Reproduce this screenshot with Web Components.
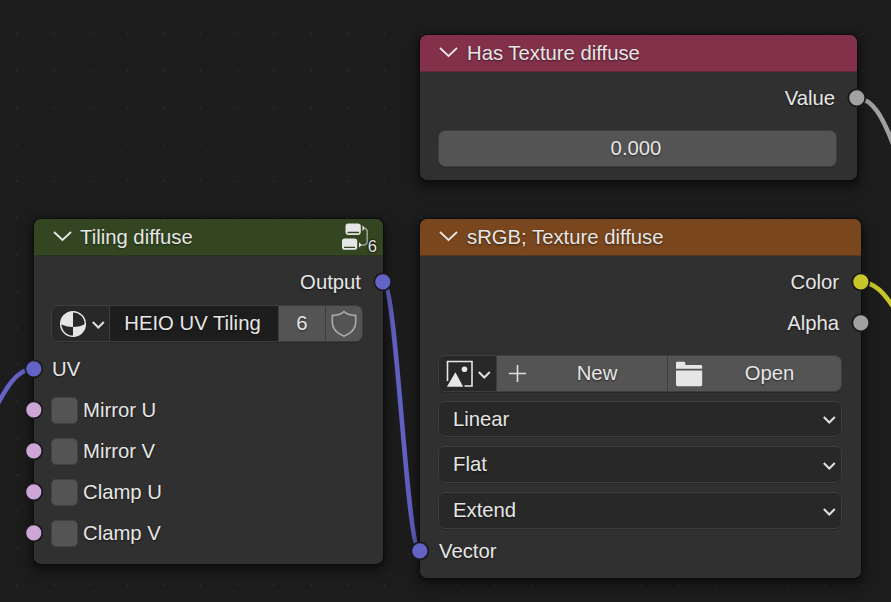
<!DOCTYPE html>
<html lang="en">
<head>
<meta charset="utf-8">
<title>Node editor</title>
<style>
html,body{margin:0;height:100%;overflow:hidden;background:#1d1d1d}
body{font:20.3px/24px "Liberation Sans",Arial,sans-serif;color:#e6e6e6;text-shadow:0 1px 2px rgba(0,0,0,.55)}
</style>
</head>
<body>
<node-canvas>
  <node-card style="left:34px;top:219px;width:349px;height:344.5px;--head:#344621;--line:#29331f;--gap:8px" label="Tiling diffuse">
    <group-badge slot="badge">6</group-badge>
    <node-socket out style="--dot:#6363c7">Output</node-socket>
    <button-row style="margin:3px 0 0 -1px;width:312px">
      <ui-cell dark style="width:57px"><ui-icon name="material"></ui-icon><ui-icon name="chevron"></ui-icon></ui-cell>
      <ui-cell style="width:168px;--cell:#1d1d1d"><span style="margin-right:3px">HEIO UV Tiling</span></ui-cell>
      <ui-cell style="width:46px"><span>6</span></ui-cell>
      <ui-cell style="flex:1"><ui-icon name="shield"></ui-icon></ui-cell>
    </button-row>
    <node-socket style="--dot:#6363c7;margin-top:6px">UV</node-socket>
    <node-socket check style="--dot:#cca6d6">Mirror U</node-socket>
    <node-socket check style="--dot:#cca6d6">Mirror V</node-socket>
    <node-socket check style="--dot:#cca6d6">Clamp U</node-socket>
    <node-socket check style="--dot:#cca6d6">Clamp V</node-socket>
  </node-card>

  <node-card style="left:420px;top:35px;width:437px;height:145px;--head:#83314a;--line:#66293d" label="Has Texture diffuse">
    <node-socket out style="--dot:#a1a1a1">Value</node-socket>
    <button-row style="margin-top:12px;width:399px">
      <ui-cell style="flex:1"><span style="margin-right:3px">0.000</span></ui-cell>
    </button-row>
  </node-card>

  <node-card style="left:420px;top:219px;width:441px;height:359px;--head:#79461d;--line:#5b371b" label="sRGB; Texture diffuse">
    <node-socket out style="--dot:#c7c729">Color</node-socket>
    <node-socket out style="--dot:#a1a1a1">Alpha</node-socket>
    <button-row style="margin-top:12px;width:404px">
      <ui-cell dark style="width:57px;padding-left:6px"><ui-icon name="image"></ui-icon><ui-icon name="chevron"></ui-icon></ui-cell>
      <ui-cell action style="width:170px"><ui-icon name="plus"></ui-icon><span>New</span></ui-cell>
      <ui-cell action style="flex:1"><ui-icon name="folder"></ui-icon><span>Open</span></ui-cell>
    </button-row>
    <ui-select style="margin-top:9px;height:36px">Linear</ui-select>
    <ui-select style="margin-top:9px">Flat</ui-select>
    <ui-select style="margin-top:9px">Extend</ui-select>
    <node-socket style="--dot:#6363c7;margin-top:1px;text-indent:1px">Vector</node-socket>
  </node-card>
</node-canvas>

<script>
const define = (name, html, setup) => customElements.define(name, class extends HTMLElement {
  connectedCallback() {
    if (this.shadowRoot) return;
    const root = this.attachShadow({mode: 'open'});
    const t = document.createElement('template');
    t.innerHTML = html;
    root.append(t.content.cloneNode(true));
    if (setup) setup(this, root);
  }
});

/* Free canvas with a dotted grid and links behind the nodes */
define('node-canvas', `
<style>
:host{display:block;position:relative;width:891px;height:602px;overflow:hidden;background:#1d1d1d}
svg{position:absolute;inset:0}
path{fill:none;stroke-width:4.6}
</style>
<svg width="891" height="602" viewBox="0 0 891 602">
  <defs><pattern id="g" x="16" y="33" width="36.75" height="36.75" patternUnits="userSpaceOnUse"><rect width="2" height="2" fill="#282828"/></pattern></defs>
  <rect width="891" height="602" fill="url(#g)"/>
  <path stroke="#6363c7" d="M383 282C397 282 406 551 420 551"/>
  <path stroke="#6363c7" d="M33 369C17 369 6 388 -5 409"/>
  <path stroke="#a1a1a1" d="M857 98C872 99 882 114 895 149"/>
  <path stroke="#c7c729" d="M861 282C874 283 883 290 897 313"/>
</svg>
<slot></slot>`);

define('node-card', `
<style>
:host{display:flex;flex-direction:column;position:absolute;box-sizing:border-box;border-radius:7px;background:#303030;
 box-shadow:0 0 0 1px rgba(12,12,12,.7),0 3px 7px 1px rgba(0,0,0,.4),0 5px 16px 4px rgba(0,0,0,.3)}
header{display:flex;align-items:center;height:36px;flex:none;background:var(--head);border-bottom:1px solid var(--line);border-radius:7px 7px 0 0;padding:0 6px 0 18px}
header ui-icon{margin-bottom:2px}
.t{margin-left:var(--gap,9px);flex:1}
main{display:flex;flex-direction:column;padding:5px 18px 0}
</style>
<header><ui-icon name="fold"></ui-icon><span class="t"></span><slot name="badge"></slot></header>
<main><slot></slot></main>`, (el, r) => { r.querySelector('.t').textContent = el.getAttribute('label'); });

define('node-socket', `
<style>
:host{display:flex;align-items:center;height:41px;flex:none;position:relative}
:host([out]){justify-content:flex-end;padding-right:4px}
svg{position:absolute;left:-28px;top:11px}
:host([out]) svg{left:auto;right:-28px}
circle{fill:var(--dot);stroke:#1a1a1a;stroke-width:1.8}
b{display:none;box-sizing:border-box;width:27px;height:27px;margin:2px 5px 0 -1px;border-radius:5px;background:#545454;border:1px solid #414141}
:host([check]) b{display:block}
</style><svg width="20" height="20"><circle cx="9.8" cy="9.8" r="8.5"/></svg><b></b><span><slot></slot></span>`);

define('button-row', `
<style>
:host{display:flex;box-sizing:border-box;height:37px;flex:none;border:1px solid #3d3d3d;border-radius:7px;background:#3d3d3d;gap:1px;overflow:hidden;box-shadow:0 1px 0 rgba(0,0,0,.15)}
</style><slot></slot>`);

define('ui-cell', `
<style>
:host{display:flex;align-items:center;justify-content:center;box-sizing:border-box;background:var(--cell,#545454);flex:none}
::slotted(span){padding-bottom:2px}
:host([dark]){--cell:#282828;gap:4px;justify-content:flex-start;padding-left:7px}
:host([action]){justify-content:flex-start;padding:0 5px 0 7px}
:host([action]) ::slotted(span){flex:1;text-align:center}
</style><slot></slot>`);

define('ui-select', `
<style>
:host{display:flex;align-items:center;justify-content:space-between;box-sizing:border-box;width:404px;height:37px;flex:none;
 padding:0 4px 0 14px;border:1px solid #3d3d3d;border-radius:7px;background:#282828;box-shadow:0 1px 0 rgba(0,0,0,.15)}
span{padding-bottom:1px}
</style><span><slot></slot></span><ui-icon name="chevron"></ui-icon>`);

/* Node-group mark with its user count */
define('group-badge', `
<style>
:host{display:block;position:relative;width:36px;height:30px}
svg{position:absolute;left:0;top:0}
span{position:absolute;right:0;bottom:-4px;font-size:16.5px;line-height:20px;text-shadow:0 0 2px #000,0 0 2px #000}
</style>
<svg width="36" height="30" viewBox="341 222 36 30">
  <rect x="345.5" y="223.6" width="15.3" height="11.3" rx="2.8" fill="#e6e6e6"/>
  <rect x="342" y="238.4" width="15.2" height="11.3" rx="2.8" fill="#e6e6e6"/>
  <path d="M347.5 232.5H359M344 247.3H355" stroke="#344621" stroke-width="1.3"/>
  <path d="M362.5 225.3L365 228.2L362.5 231.1ZM359 242.2L361.8 244.9L359 247.6Z" fill="#e6e6e6"/>
  <path d="M364 228.2Q367.2 228.4 367.2 231.6V241.6Q367.2 244.9 364 244.9H361" fill="none" stroke="#9ba392" stroke-width="1.5"/>
</svg><span><slot></slot></span>`);

const ICONS = {
  fold: [20, 14, '<path d="M2 3L10.5 11L19 3" fill="none" stroke="#e6e6e6" stroke-width="1.8"/>'],
  chevron: [15, 12, '<path d="M1.8 4L7.3 9.5L12.8 4" fill="none" stroke="#e0e0e0" stroke-width="2"/>'],
  material: [28, 28, '<circle cx="14" cy="14" r="12.3" fill="#282828" stroke="#e6e6e6" stroke-width="1.5"/><path d="M14 1.7V17Q7 17 1.7 14A12.3 12.3 0 0 1 14 1.7ZM14 17Q21 17 26.3 14A12.3 12.3 0 0 1 14 26.3Z" fill="#e6e6e6"/>'],
  shield: [28, 28, '<path d="M14 1.7C11 4.3 7 5.6 2.3 5.3V12.5C2.3 19.5 7.5 23.5 14 26.3C20.5 23.5 25.7 19.5 25.7 12.5V5.3C21 5.6 17 4.3 14 1.7Z" fill="none" stroke="#a8a8a8" stroke-width="1.7"/>'],
  image: [28, 28, '<path d="M2.5 21V1.5H27V26H19.5" fill="none" stroke="#e6e6e6" stroke-width="1.6"/><path d="M1.9 26.8L10.4 12.2L18.2 26.8Z" fill="#e6e6e6"/><circle cx="19.5" cy="9.2" r="2.8" fill="#e6e6e6"/>'],
  plus: [28, 28, '<path d="M5 13.5H22M13.5 5V22" stroke="#e0e0e0" stroke-width="1.6"/>'],
  folder: [28, 28, '<path d="M1 8.7V3Q1 1.7 2.3 1.7H9Q10.3 1.7 10.3 3V5H26Q27.2 5 27.2 6.2V8.7ZM1 10.5H27.2V24.6Q27.2 26.3 25.7 26.3H2.5Q1 26.3 1 24.6Z" fill="#e6e6e6"/>']
};
define('ui-icon', `<style>:host{display:block;flex:none}svg{display:block}</style>`, (el, r) => {
  const [w, h, body] = ICONS[el.getAttribute('name')];
  r.innerHTML += `<svg width="${w}" height="${h}" viewBox="0 0 ${w} ${h}">${body}</svg>`;
});
</script>
</body>
</html>
